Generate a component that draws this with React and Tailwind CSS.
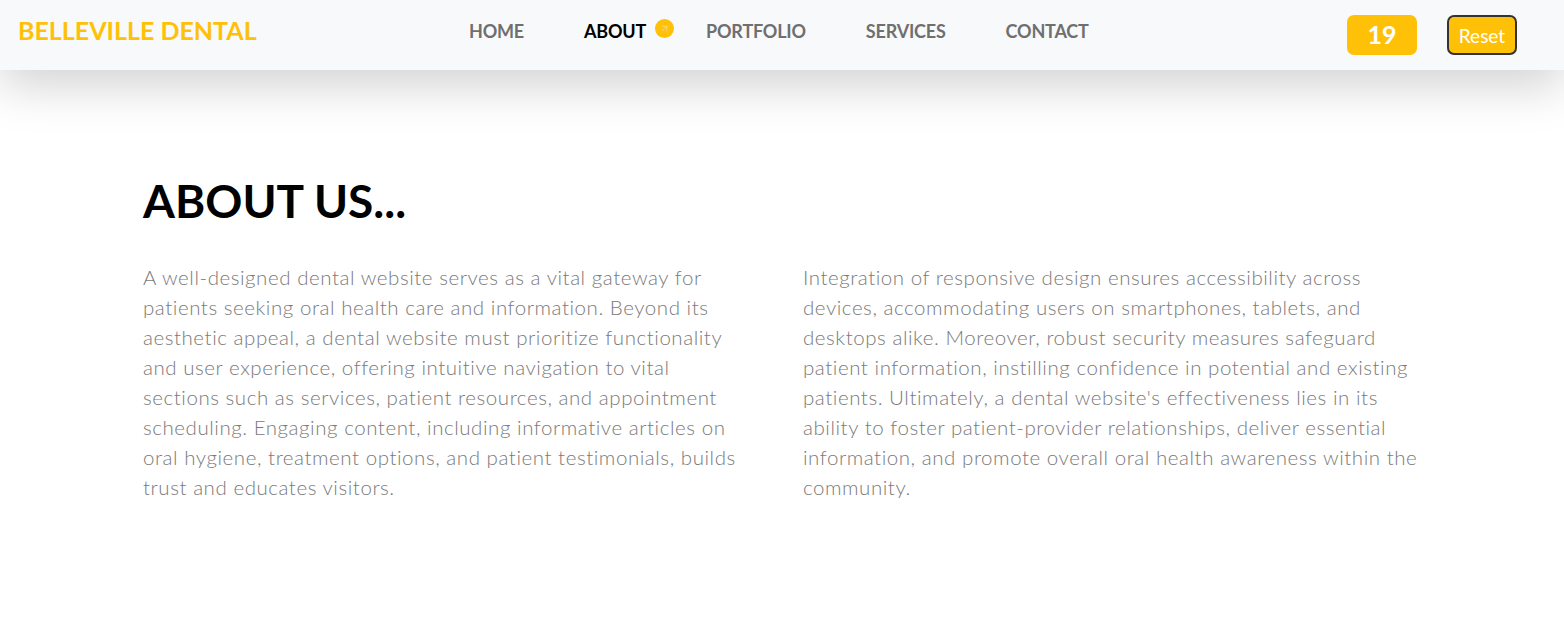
import { ArrowUpRight } from "lucide-react";

const leftLines = [
  "A well-designed dental website serves as a vital gateway for",
  "patients seeking oral health care and information. Beyond its",
  "aesthetic appeal, a dental website must prioritize functionality",
  "and user experience, offering intuitive navigation to vital",
  "sections such as services, patient resources, and appointment",
  "scheduling. Engaging content, including informative articles on",
  "oral hygiene, treatment options, and patient testimonials, builds",
  "trust and educates visitors.",
];

const rightLines = [
  "Integration of responsive design ensures accessibility across",
  "devices, accommodating users on smartphones, tablets, and",
  "desktops alike. Moreover, robust security measures safeguard",
  "patient information, instilling confidence in potential and existing",
  "patients. Ultimately, a dental website's effectiveness lies in its",
  "ability to foster patient-provider relationships, deliver essential",
  "information, and promote overall oral health awareness within the",
  "community.",
];

const links = ["HOME", "ABOUT", "PORTFOLIO", "SERVICES", "CONTACT"];

export default function App() {
  return (
    <div className="min-h-[642px] bg-white font-['Lato','Liberation_Sans',sans-serif]">
      {/* navbar */}
      <nav className="relative z-10 flex h-[70px] items-center bg-[#f8f9fa] shadow-[0_16px_48px_rgba(0,0,0,0.175)]">
        <div className="w-[440px] pb-2 pl-[18px] text-[25px] font-bold text-[#ffc107]">BELLEVILLE DENTAL</div>
        <ul className="ml-[29px] flex gap-[60px] pb-2">
          {links.map((l) => (
            <li key={l} className="relative">
              <a
                href="#"
                className={`text-[18px] font-bold tracking-[-0.2px] ${l === "ABOUT" ? "text-black" : "text-[#6f6f6f]"}`}
              >
                {l}
              </a>
              {l === "ABOUT" && (
                <span className="absolute left-full top-[1px] ml-[9px] flex h-[19px] w-[19px] items-center justify-center rounded-full bg-[#ffc107]">
                  <ArrowUpRight size={11} strokeWidth={1.5} className="text-[#ffe08a]" />
                </span>
              )}
            </li>
          ))}
        </ul>
        <div className="ml-auto flex items-center gap-[30px] pr-[47px]">
          <div className="flex h-10 w-[70px] items-center justify-center rounded-[7px] bg-[#ffc107] text-[25px] font-bold text-white">
            19
          </div>
          <button className="flex h-10 w-[70px] items-center justify-center rounded-[7px] border-2 border-[#333] bg-[#ffc107] pt-[2px] text-[19px] text-white">
            Reset
          </button>
        </div>
      </nav>

      {/* about */}
      <section className="pl-[143px] pt-[102px]">
        <h1 className="text-[46px] font-bold leading-[58px] text-black">ABOUT US...</h1>
        <div className="mt-[32px] grid grid-cols-[630px_630px] gap-[30px]">
          {[leftLines, rightLines].map((lines, i) => (
            <p key={i} className="text-[20.5px] font-light leading-[30px] tracking-[0.55px] text-[#7a7a7a]">
              {lines.map((t) => (
                <span key={t} className="block whitespace-nowrap">
                  {t}
                </span>
              ))}
            </p>
          ))}
        </div>
      </section>
    </div>
  );
}
